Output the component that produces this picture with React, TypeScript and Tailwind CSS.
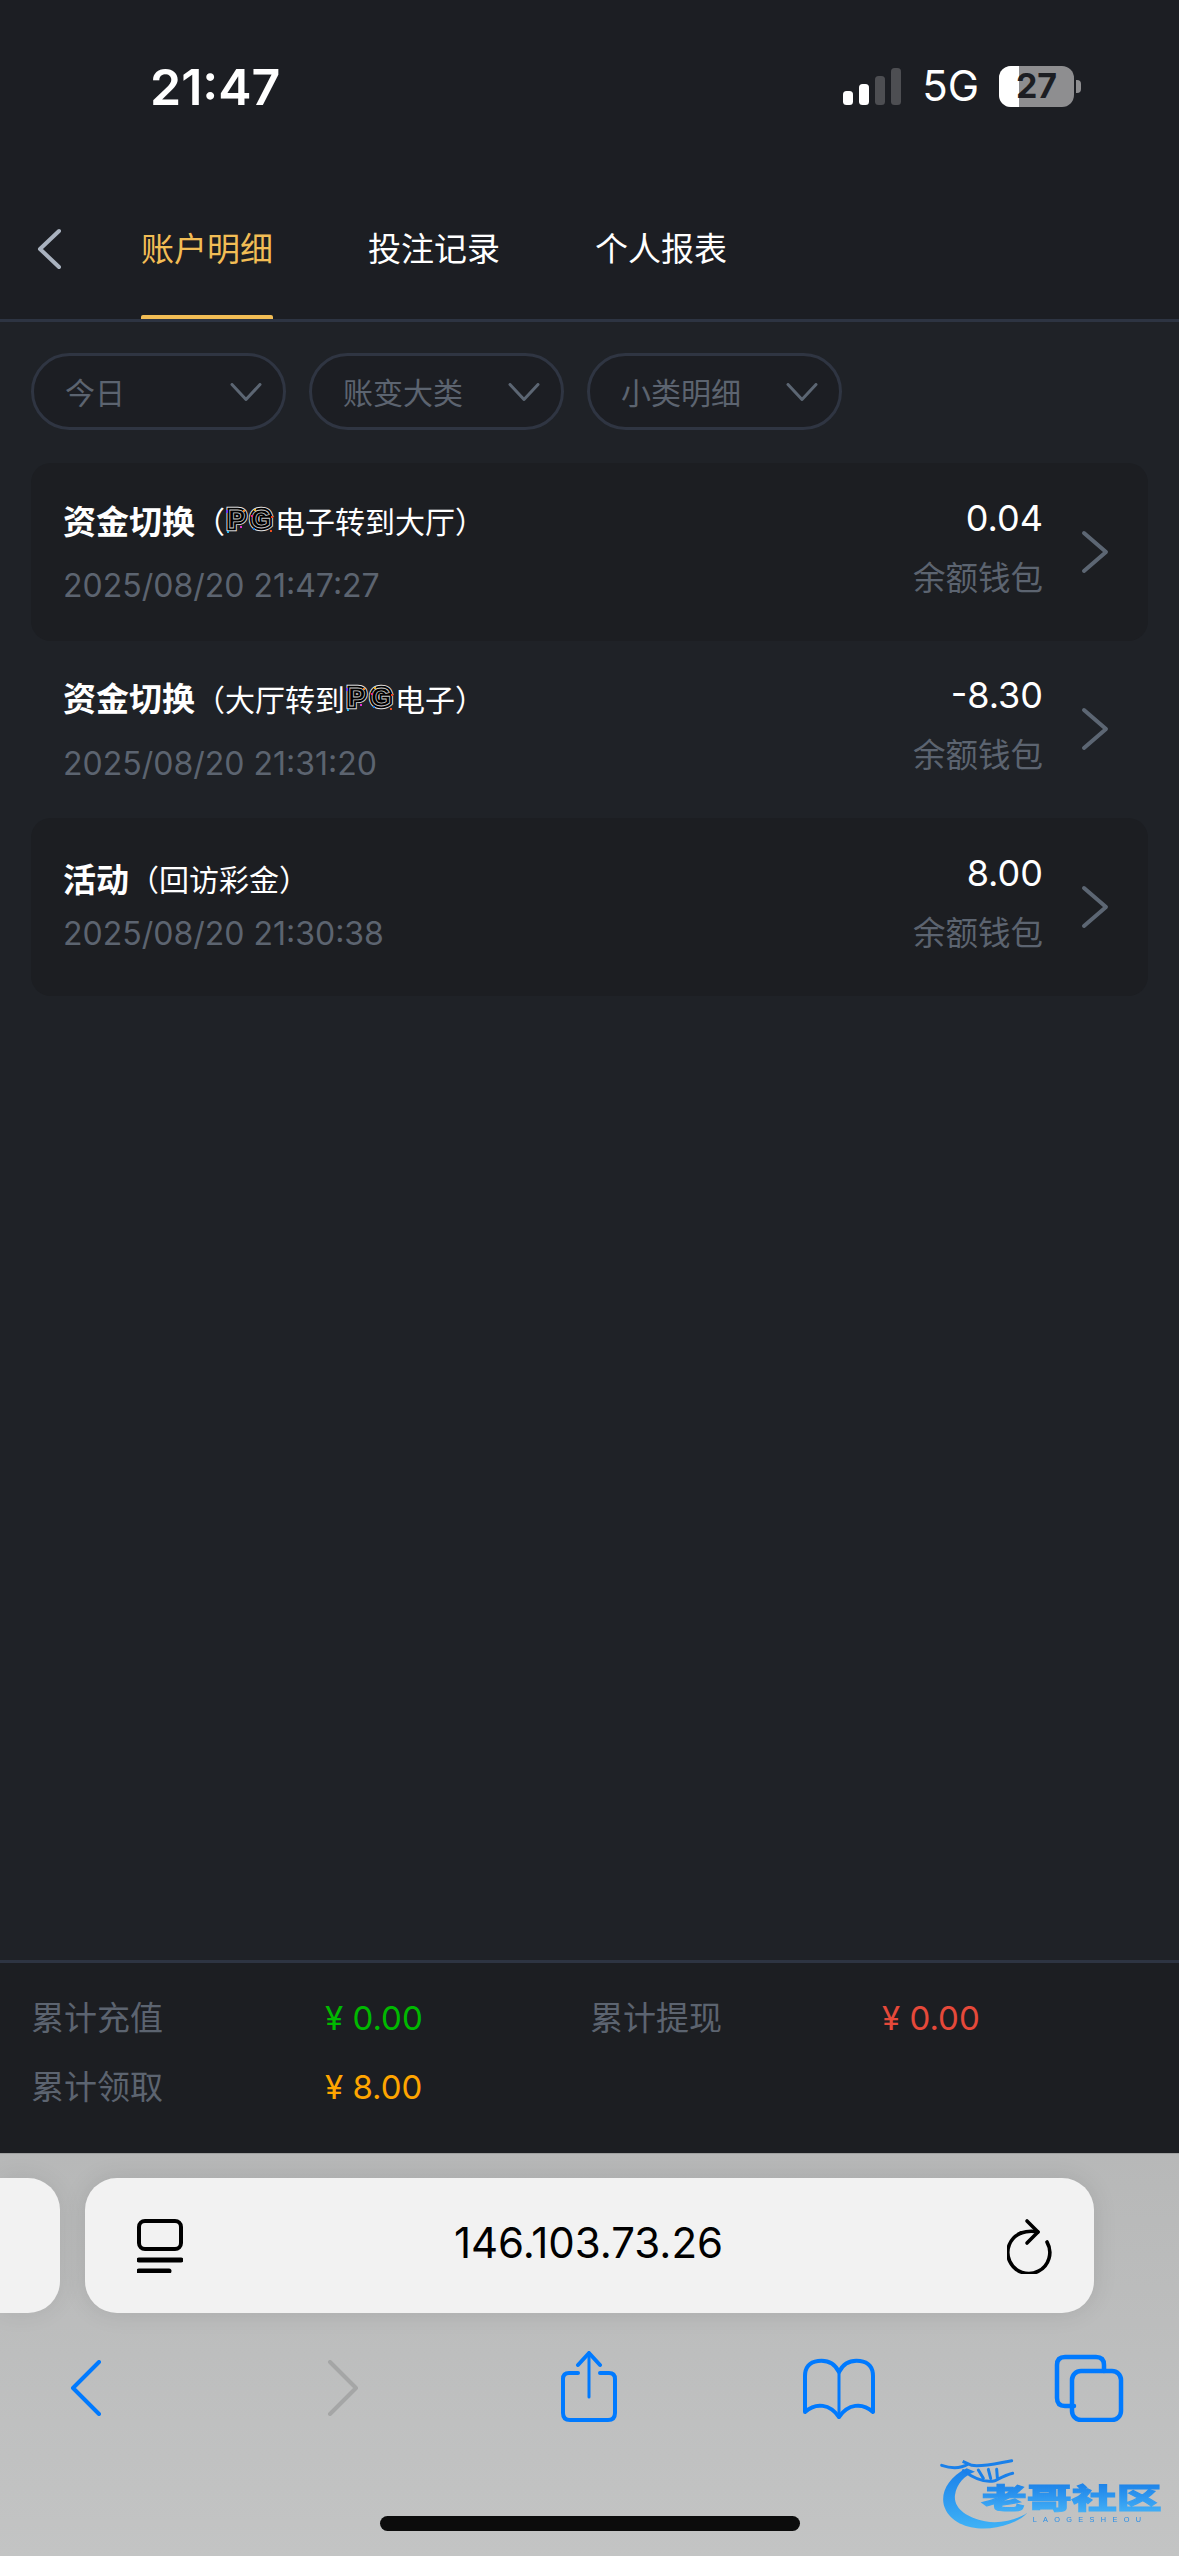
import React from "react";

const FONT = "font-['Inter','Noto_Sans_CJK_SC',sans-serif]";

function PG() {
  const t = { y: 24, fontSize: 26, fontWeight: 900, fontFamily: "'Liberation Sans',sans-serif" } as const;
  const word = (x: number, s: string) => (
    <>
      <text {...t} x={x} fill="#000" stroke="#e4e4e4" strokeWidth={6.4} strokeLinejoin="miter">{s}</text>
      <text {...t} x={x} fill="#000" stroke="#000" strokeWidth={4.6} strokeLinejoin="miter">{s}</text>
      <text {...t} x={x} fill="none" stroke="#c8c8c8" strokeWidth={0.8}>{s}</text>
    </>
  );
  return (
    <svg width="50" height="36" viewBox="0 0 50 36" className="shrink-0 -my-[5px] overflow-visible">
      {word(3, "P")}
      {word(26, "G")}
      <rect x="1" y="6" width="2" height="3" fill="#6a35e8" />
      <rect x="18" y="6" width="2" height="2" fill="#f08020" />
      <rect x="2" y="27" width="2" height="2" fill="#2bb8f0" />
      <rect x="15" y="22" width="2" height="2" fill="#e030d0" />
      <rect x="29" y="5" width="2" height="2" fill="#f0b020" />
      <rect x="26" y="11" width="2" height="2" fill="#e02890" />
      <rect x="46" y="12" width="2" height="2" fill="#f04020" />
      <rect x="28" y="24" width="2" height="2" fill="#2080e0" />
      <rect x="45" y="26" width="2" height="2" fill="#f05020" />
    </svg>
  );
}

function Chev() {
  return (
    <svg width="32" height="18" viewBox="0 0 32 18" fill="none" stroke="#5c6673" strokeWidth="3" strokeLinecap="round" strokeLinejoin="round">
      <path d="M2 1.5 L16 16.5 L30 1.5" />
    </svg>
  );
}

function Pill({ label }: { label: string }) {
  return (
    <div className="w-[255px] h-[77px] rounded-[39px] border-[3px] border-[#2f3542] bg-[#1c1e23] flex items-center justify-between pl-[31px] pr-[21px]">
      <span className="text-[30px] leading-none text-[#5c6470] mt-[2px]">{label}</span>
      <Chev />
    </div>
  );
}

function Row({ title, sub, date, amount, card, compact }: { title: string; sub: React.ReactNode; date: string; amount: string; card?: boolean; compact?: boolean }) {
  return (
    <div className={`h-[177.5px] rounded-[20px] flex items-center pl-[32px] pr-[39px] ${card ? "bg-[#1c1e22]" : ""}`}>
      <div className={`flex-1 flex flex-col ${compact ? "pt-[1px]" : "pt-[5px]"}`}>
        <div className="flex items-center h-[38px] text-white">
          <span className="text-[33px] leading-none font-bold">{title}</span>
          <span className="flex items-center text-[30px] leading-none">{sub}</span>
        </div>
        <div className={`text-[32px] leading-[38px] text-[#5c6470] ${compact ? "mt-[16px]" : "mt-[26px]"}`}>{date}</div>
      </div>
      <div className="flex flex-col items-end mr-[38px] mb-[8px]">
        <div className="text-[36px] leading-[42px] text-white">{amount}</div>
        <div className="mt-[20px] text-[32.5px] leading-[40px] text-[#5c6470]">余额钱包</div>
      </div>
      <svg width="28" height="44" viewBox="0 0 28 44" fill="none" stroke="#5c6673" strokeWidth="4" strokeLinecap="round" strokeLinejoin="round">
        <path d="M3 3 L25 22 L3 41" />
      </svg>
    </div>
  );
}

export default function App() {
  return (
    <div className={`relative w-[1179px] h-[2556px] overflow-hidden bg-[#1f2227] flex flex-col ${FONT}`}>
      {/* status + tabs */}
      <div className="h-[319px] shrink-0 bg-[#1c1e23] flex flex-col">
        <div className="h-[176px] shrink-0 flex items-start justify-between pt-[61px] pl-[150px] pr-[98px]">
          <span className="text-[50px] leading-[52px] font-semibold text-white">21:47</span>
          <div className="flex items-center h-[52px] mt-[-1px]">
            <svg width="58" height="37" viewBox="0 0 58 37" className="mr-[21px]">
              <rect x="0" y="23" width="10" height="14" rx="3.5" fill="#fff" />
              <rect x="16" y="16" width="10" height="21" rx="3.5" fill="#fff" />
              <rect x="32" y="8" width="10" height="29" rx="3.5" fill="#4d4e52" />
              <rect x="48" y="0" width="10" height="37" rx="3.5" fill="#4d4e52" />
            </svg>
            <span className="text-[42px] leading-none text-white mr-[20px]">5G</span>
            <div className="relative w-[75px] h-[41px] rounded-[12px] bg-[#8e8e90] overflow-hidden flex items-center justify-center">
              <div className="absolute left-0 top-0 bottom-0 w-[20px] bg-white" />
              <span className="relative text-[34px] leading-none font-bold text-[#1c1e23]">27</span>
            </div>
            <div className="w-[5px] h-[13px] ml-[2px] rounded-r-[4px] bg-[#8e8e90]" />
          </div>
        </div>
        <div className="flex h-[143px] relative">
          <svg width="26" height="42" viewBox="0 0 26 42" fill="none" stroke="#a9b2bf" strokeWidth="4" strokeLinecap="round" strokeLinejoin="round" className="ml-[37px] mt-[52px]">
            <path d="M22 3 L3 21 L22 39" />
          </svg>
          <div className="ml-[78px] flex gap-[95px] text-[33px] text-white">
            <div className="relative w-[132px] h-[143px] flex items-center justify-center pt-[4px] text-[#f2bd55] whitespace-nowrap">
              <span>账户明细</span>
              <div className="absolute left-0 right-0 bottom-0 h-[4px] rounded-t-[2px] bg-[#f2bd55]" />
            </div>
            <div className="w-[132px] h-[143px] flex items-center justify-center pt-[4px] whitespace-nowrap">投注记录</div>
            <div className="w-[132px] h-[143px] flex items-center justify-center pt-[4px] whitespace-nowrap">个人报表</div>
          </div>
        </div>
      </div>
      <div className="h-[3px] shrink-0 bg-[#2d3442]" />

      {/* filters */}
      <div className="flex gap-[23px] pl-[31px] pt-[31px]">
        <Pill label="今日" />
        <Pill label="账变大类" />
        <Pill label="小类明细" />
      </div>

      {/* rows */}
      <div className="flex-1 flex flex-col pl-[31px] pr-[31px] pt-[33px]">
        <Row card title="资金切换" date="2025/08/20 21:47:27" amount="0.04" sub={<>（<PG />电子转到大厅）</>} />
        <Row title="资金切换" date="2025/08/20 21:31:20" amount="-8.30" sub={<>（大厅转到<PG />电子）</>} />
        <Row card compact title="活动" date="2025/08/20 21:30:38" amount="8.00" sub={<>（回访彩金）</>} />
      </div>

      {/* totals */}
      <div className="h-[3px] shrink-0 bg-[#2d3442]" />
      <div className="h-[190px] shrink-0 bg-[#1c1e22] pl-[31px] pt-[31px]">
        <div className="grid grid-cols-[294px_265px_292px_1fr] gap-y-[21px] text-[33px] leading-[48px] text-[#5c6470]">
          <span>累计充值</span>
          <span className="text-[#00b900]">¥ 0.00</span>
          <span>累计提现</span>
          <span className="text-[#e6493a]">¥ 0.00</span>
          <span>累计领取</span>
          <span className="text-[#ffa500]">¥ 8.00</span>
        </div>
      </div>

      {/* browser chrome */}
      <div className="h-[403px] shrink-0 bg-gradient-to-b from-[#b7b8b8] to-[#c3c4c4] border-t border-[#9fa0a0] flex flex-col">
        <div className="flex mt-[24px] gap-[25px]">
          <div className="w-[60px] h-[135px] shrink-0 rounded-r-[32px] bg-[#f2f2f2] shadow-[0_0_24px_rgba(0,0,0,0.08)]" />
          <div className="w-[1009px] h-[135px] shrink-0 rounded-[32px] bg-[#f2f2f2] shadow-[0_0_24px_rgba(0,0,0,0.1)] flex items-center justify-between pl-[52px] pr-[41px]">
            <svg width="46" height="54" viewBox="0 0 46 54" fill="none" stroke="#000" strokeWidth="4" strokeLinecap="round">
              <rect x="2" y="2" width="42" height="28" rx="6" />
              <path d="M2 41 H44" strokeWidth="5" />
              <path d="M2 52 H32" strokeWidth="5" />
            </svg>
            <span className="text-[42px] leading-none text-black -mt-[6px] -ml-[13px]">146.103.73.26</span>
            <svg width="46" height="56" viewBox="0 0 46 56" fill="none" stroke="#000" strokeWidth="3.6" strokeLinecap="round" strokeLinejoin="round">
              <path d="M14 15 A21 21 0 1 0 40 24" />
              <path d="M20 3 L31 14 L20 25" />
              <path d="M14 15 C20 13 26 13 31 14" />
            </svg>
          </div>
        </div>

        <div className="relative flex mt-[38px] h-[72px]">
          <svg width="32" height="56" viewBox="0 0 32 56" fill="none" stroke="#007aff" strokeWidth="4" strokeLinecap="round" strokeLinejoin="round" className="ml-[70px] mt-[9px]">
            <path d="M29 2 L3 28 L29 54" />
          </svg>
          <svg width="32" height="56" viewBox="0 0 32 56" fill="none" stroke="#a5a6a6" strokeWidth="4" strokeLinecap="round" strokeLinejoin="round" className="ml-[225px] mt-[9px]">
            <path d="M3 2 L29 28 L3 54" />
          </svg>
          <svg width="58" height="72" viewBox="0 0 58 72" fill="none" stroke="#007aff" strokeWidth="4" strokeLinecap="round" strokeLinejoin="round" className="ml-[201px]">
            <path d="M18 22 H9 Q3 22 3 28 V62 Q3 69 10 69 H48 Q55 69 55 62 V28 Q55 22 49 22 H40" />
            <path d="M29 46 V2" strokeWidth="3" />
            <path d="M18 14 L29 2 L40 14" />
          </svg>
          <svg width="74" height="62" viewBox="0 0 74 62" fill="none" stroke="#007aff" strokeWidth="4" strokeLinecap="round" strokeLinejoin="round" className="ml-[184px] mt-[7px]">
            <path d="M37 14 C32 4 24 2 16 3 C7 4 3 10 3 18 V54 C14 44 28 46 37 59 C46 46 60 44 71 54 V18 C71 10 67 4 58 3 C50 2 42 4 37 14 Z" />
            <path d="M37 14 V59" strokeWidth="3" />
          </svg>
          <svg width="70" height="68" viewBox="0 0 70 68" fill="none" stroke="#007aff" strokeWidth="4.5" strokeLinecap="round" strokeLinejoin="round" className="ml-[178px] mt-[3px]">
            <path d="M20 52 H11 Q3 52 3 44 V11 Q3 3 11 3 H42 Q50 3 50 11 V17" />
            <rect x="18" y="17" width="49" height="49" rx="9" />
          </svg>
        </div>

        <div className="mt-[93px] ml-[380px] w-[420px] h-[15px] rounded-full bg-[#0c0c0c]" />
      </div>

      {/* watermark */}
      <svg width="279" height="116" viewBox="0 0 837 348" className="absolute right-0 bottom-0 blur-[0.6px]">
        <defs>
          <linearGradient id="wm" x1="0" y1="0" x2="0" y2="1">
            <stop offset="0" stopColor="#1478e6" />
            <stop offset="1" stopColor="#48b6f8" />
          </linearGradient>
          <linearGradient id="sw" x1="0" y1="0" x2="0" y2="1">
            <stop offset="0" stopColor="#1a80ea" />
            <stop offset="1" stopColor="#3fb2f6" />
          </linearGradient>
        </defs>
        <path d="M200 85 C140 115 118 165 135 205 C155 255 225 275 290 262 C330 254 362 240 382 218 C350 240 300 252 255 244 C200 232 160 205 165 165 C170 130 195 105 225 95 Z" fill="url(#sw)" />
        <path d="M125 76 C160 88 185 84 205 72 L188 64 L215 76 C245 82 290 70 335 62 M190 92 C225 118 260 128 285 122 C305 112 320 104 338 100 M235 90 L250 115 M265 88 L272 115 M290 88 L292 112" fill="none" stroke="#1a80ea" strokeWidth="9" strokeLinecap="round" />
        <text x="245" y="207" fontSize="84" fontWeight="900" fill="url(#wm)" stroke="url(#wm)" strokeWidth="3" textLength="540" lengthAdjust="spacingAndGlyphs" fontFamily="'Noto Sans CJK SC',sans-serif">老哥社区</text>
        <text x="398" y="247" fontSize="22" fill="#2a8fe8" textLength="325" fontFamily="'Liberation Sans',sans-serif">LAOGESHEOU</text>
      </svg>
    </div>
  );
}
